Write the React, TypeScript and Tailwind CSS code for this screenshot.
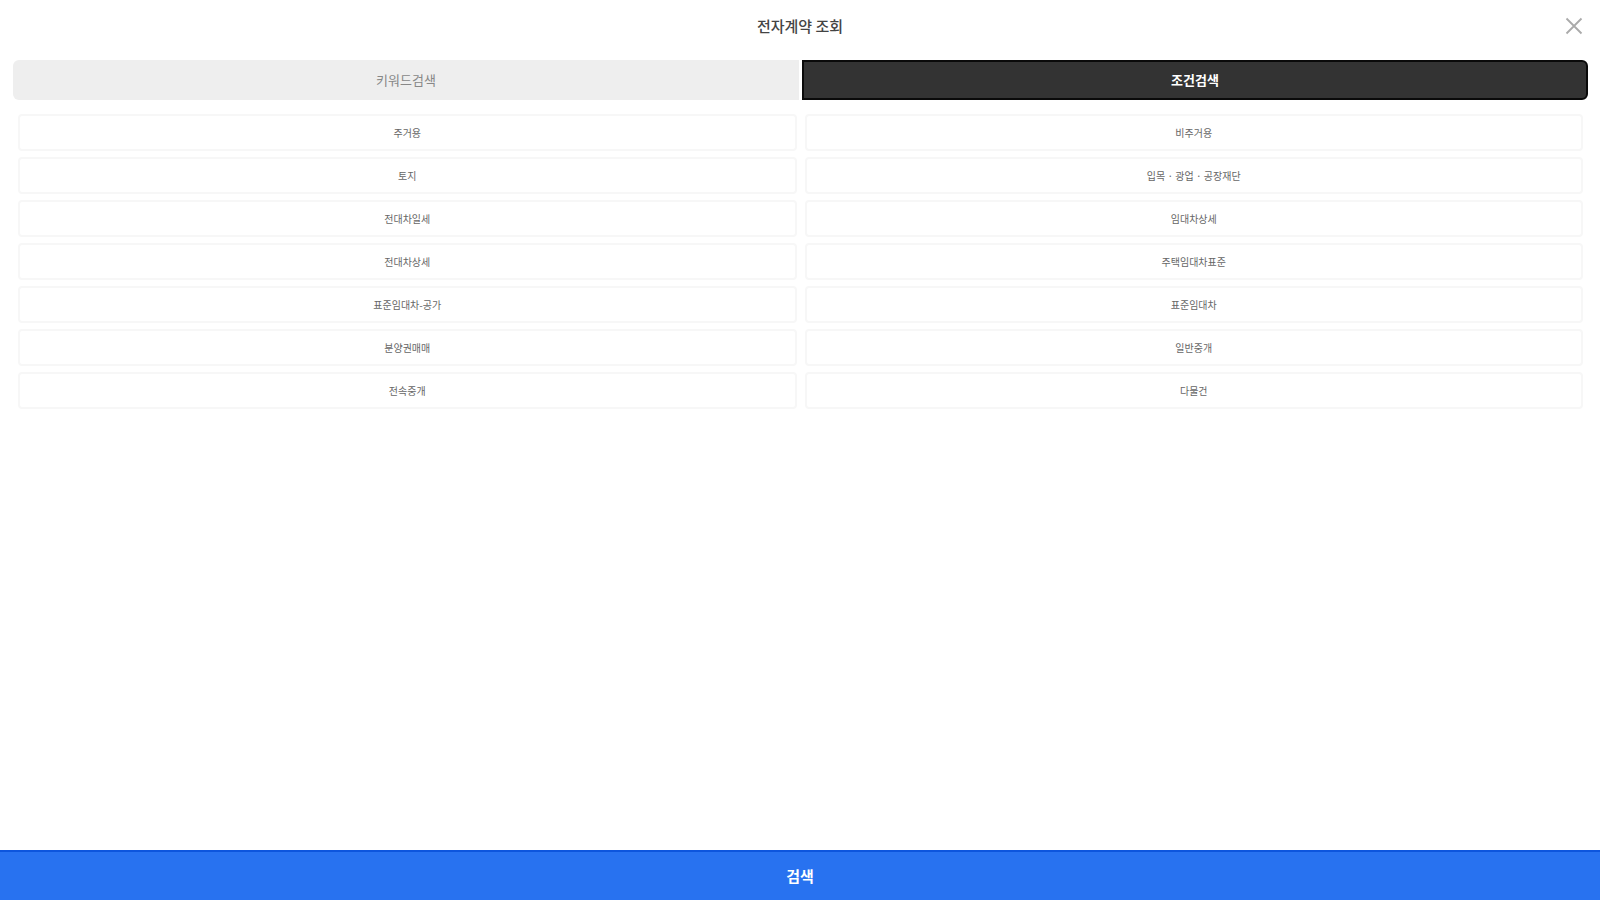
import { useState } from 'react'

const tabs = ['키워드검색', '조건검색']

const contractTypes = [
  '주거용',
  '비주거용',
  '토지',
  '입목 · 광업 · 공장재단',
  '전대차일세',
  '임대차상세',
  '전대차상세',
  '주택임대차표준',
  '표준임대차-공가',
  '표준임대차',
  '분양권매매',
  '일반중개',
  '전속중개',
  '다물건',
]

export default function App() {
  const [activeTab, setActiveTab] = useState('조건검색')
  const [selected, setSelected] = useState('')

  return (
    <div className="min-h-screen flex flex-col bg-white font-['Noto_Sans_CJK_KR','Noto_Sans',sans-serif]">
      {/* Header */}
      <header className="grid grid-cols-[1fr_auto_1fr] items-center h-[52px] px-4">
        <h1 className="col-start-2 text-[15px] font-medium text-[#444]">전자계약 조회</h1>
        <button type="button" aria-label="닫기" className="justify-self-end text-[#aaa] cursor-pointer">
          <svg width="20" height="20" viewBox="0 0 20 20" fill="none" stroke="currentColor" strokeWidth="1.8">
            <path d="M2.5 2.5l15 15M17.5 2.5l-15 15" />
          </svg>
        </button>
      </header>

      <main className="flex-1 pl-[13px] pr-3 pt-2">
        {/* Tabs */}
        <div className="grid grid-cols-2 gap-[3px] h-10">
          {tabs.map((tab) => (
            <button
              key={tab}
              type="button"
              onClick={() => setActiveTab(tab)}
              className={
                activeTab === tab
                  ? 'text-[13px] font-bold text-white bg-[#333] border-2 border-[#0a0a0a] first:rounded-l-md last:rounded-r-md cursor-pointer'
                  : 'text-[13px] text-[#888] bg-[#eee] first:rounded-l-md last:rounded-r-md cursor-pointer'
              }
            >
              {tab}
            </button>
          ))}
        </div>

        {/* Contract types */}
        <div className="grid grid-cols-2 gap-x-2 gap-y-[6px] px-[5px] pt-[14px]">
          {contractTypes.map((type) => (
            <button
              key={type}
              type="button"
              aria-pressed={selected === type}
              onClick={() => setSelected(type)}
              className="h-[37px] rounded-sm border-2 border-[#f7f7f7] text-[10px] text-[#666] aria-pressed:border-[#2872f0] cursor-pointer"
            >
              {type}
            </button>
          ))}
        </div>
      </main>

      <button type="button" className="h-[50px] border-t-2 border-[#0d55dd] bg-[#2872f0] text-[15px] font-bold text-white cursor-pointer">
        검색
      </button>
    </div>
  )
}
